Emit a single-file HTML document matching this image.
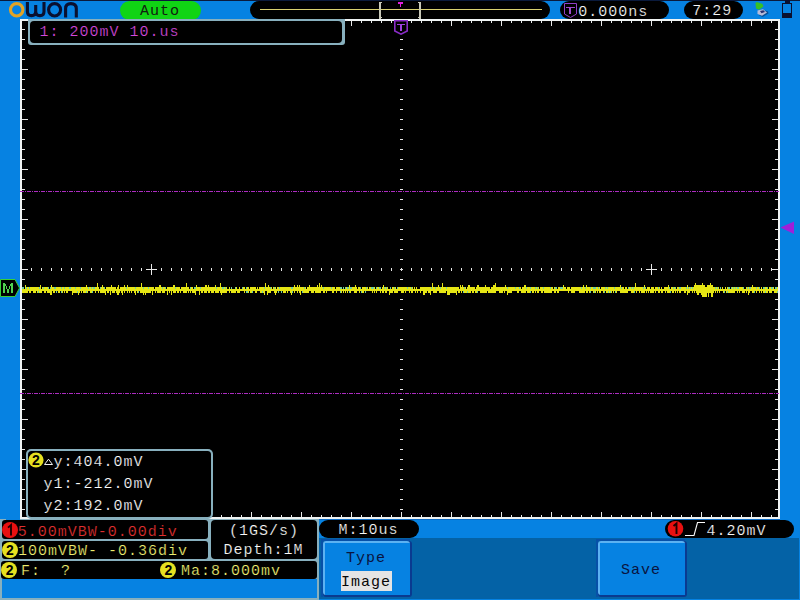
<!DOCTYPE html>
<html><head><meta charset="utf-8"><style>
html,body{margin:0;padding:0;width:800px;height:600px;overflow:hidden;background:#0682e2;}
svg{display:block;font-family:"Liberation Mono", monospace;}
rect{shape-rendering:crispEdges;}
</style></head><body>
<svg width="800" height="600" viewBox="0 0 800 600" >
<rect x="0" y="0" width="800" height="600" fill="#0682e2" />
<rect x="0" y="0" width="800" height="1" fill="#0a1a3c" />
<circle cx="16.7" cy="9.8" r="6.2" fill="none" stroke="#e3a325" stroke-width="3.1"/>
<path d="M27.4 2 V11.5 Q27.4 15.6 31.5 15.6 Q35.7 15.6 35.7 11.5 V5 M35.7 11.5 Q35.7 15.6 40 15.6 Q44 15.6 44 11.5 V2" fill="none" stroke="#0a1030" stroke-width="3.1"/>
<ellipse cx="54.6" cy="9.8" rx="6.0" ry="6.2" fill="none" stroke="#0a1030" stroke-width="3.1"/>
<path d="M65.6 17.5 V8.6 Q65.6 3.6 70.9 3.6 Q76.3 3.6 76.3 8.6 V17.5" fill="none" stroke="#0a1030" stroke-width="3.1"/>
<rect x="120" y="1" width="81" height="19" rx="9.5" ry="9.5" fill="#10d414" style="shape-rendering:auto" />
<text x="140.00 150.00 160.00 170.00" y="15" fill="#102010" font-size="15" >Auto</text>
<rect x="250" y="1" width="300" height="18" rx="9" ry="9" fill="#000" style="shape-rendering:auto" />
<rect x="260" y="9" width="282" height="1" fill="#d8d070" />
<rect x="379" y="2" width="2" height="17" fill="#c8c8b8" />
<rect x="381" y="2" width="1" height="1" fill="#c8c8b8" />
<rect x="381" y="17" width="1" height="1" fill="#c8c8b8" />
<rect x="419" y="2" width="2" height="17" fill="#c8c8b8" />
<rect x="418" y="2" width="1" height="1" fill="#c8c8b8" />
<rect x="418" y="17" width="1" height="1" fill="#c8c8b8" />
<rect x="398" y="2" width="5" height="2" fill="#e020e0" />
<rect x="400" y="4" width="1" height="3" fill="#e020e0" />
<rect x="560" y="1" width="109" height="18" rx="9" ry="9" fill="#000" style="shape-rendering:auto" />
<text x="578.30 588.30 598.30 608.30 618.30 628.30 638.30" y="16" fill="#fafafa" font-size="15"  stroke="#000" stroke-width="0.2">0.000ns</text>
<rect x="684" y="1" width="59" height="18" rx="9" ry="9" fill="#000" style="shape-rendering:auto" />
<text x="692.20 702.20 712.20 722.20" y="15" fill="#fafafa" font-size="15"  stroke="#000" stroke-width="0.2">7:29</text>
<path d="M564.5 3.5 H576.5 V14 L570.5 17.5 L564.5 14 Z" fill="#000" stroke="#9040c8" stroke-width="1"/>
<rect x="566" y="7" width="9" height="1" fill="#a048d0" />
<rect x="569" y="8" width="2" height="6" fill="#a048d0" />
<path d="M758.5 15 L762.5 17 L768.5 13.5 L768 11.5 L765.5 10.5 Z" fill="#0a3a78" opacity="0.7"/>
<path d="M755.5 3 L757 2 L762.5 4 L763.5 6.5 L759 9.8 L756 8.5 Z" fill="#38c024"/>
<path d="M757.5 10.5 L763 9.2 L767 12.5 L762 15.8 L757.5 14 Z" fill="#b8bcd8"/>
<path d="M760 11 L763.5 10.2 L765 12 L761.5 13.2 Z" fill="#283070"/>
<rect x="785" y="0" width="5" height="3" fill="#0a1030" />
<rect x="782" y="3" width="10" height="15" fill="#0a1030" />
<rect x="783" y="4" width="8" height="9" fill="#0682e2" />
<rect x="20" y="19" width="760" height="500" fill="#f0f4f4" />
<rect x="22" y="21" width="756" height="496" fill="#000" />
<rect x="31" y="21" width="1" height="2" fill="#e8e8e8" />
<rect x="31" y="515" width="1" height="2" fill="#e8e8e8" />
<rect x="41" y="21" width="1" height="2" fill="#e8e8e8" />
<rect x="41" y="515" width="1" height="2" fill="#e8e8e8" />
<rect x="51" y="21" width="1" height="5" fill="#e8e8e8" />
<rect x="51" y="512" width="1" height="5" fill="#e8e8e8" />
<rect x="61" y="21" width="1" height="2" fill="#e8e8e8" />
<rect x="61" y="515" width="1" height="2" fill="#e8e8e8" />
<rect x="71" y="21" width="1" height="2" fill="#e8e8e8" />
<rect x="71" y="515" width="1" height="2" fill="#e8e8e8" />
<rect x="81" y="21" width="1" height="2" fill="#e8e8e8" />
<rect x="81" y="515" width="1" height="2" fill="#e8e8e8" />
<rect x="91" y="21" width="1" height="2" fill="#e8e8e8" />
<rect x="91" y="515" width="1" height="2" fill="#e8e8e8" />
<rect x="101" y="21" width="1" height="5" fill="#e8e8e8" />
<rect x="101" y="512" width="1" height="5" fill="#e8e8e8" />
<rect x="111" y="21" width="1" height="2" fill="#e8e8e8" />
<rect x="111" y="515" width="1" height="2" fill="#e8e8e8" />
<rect x="121" y="21" width="1" height="2" fill="#e8e8e8" />
<rect x="121" y="515" width="1" height="2" fill="#e8e8e8" />
<rect x="131" y="21" width="1" height="2" fill="#e8e8e8" />
<rect x="131" y="515" width="1" height="2" fill="#e8e8e8" />
<rect x="141" y="21" width="1" height="2" fill="#e8e8e8" />
<rect x="141" y="515" width="1" height="2" fill="#e8e8e8" />
<rect x="151" y="21" width="1" height="5" fill="#e8e8e8" />
<rect x="151" y="512" width="1" height="5" fill="#e8e8e8" />
<rect x="161" y="21" width="1" height="2" fill="#e8e8e8" />
<rect x="161" y="515" width="1" height="2" fill="#e8e8e8" />
<rect x="171" y="21" width="1" height="2" fill="#e8e8e8" />
<rect x="171" y="515" width="1" height="2" fill="#e8e8e8" />
<rect x="181" y="21" width="1" height="2" fill="#e8e8e8" />
<rect x="181" y="515" width="1" height="2" fill="#e8e8e8" />
<rect x="191" y="21" width="1" height="2" fill="#e8e8e8" />
<rect x="191" y="515" width="1" height="2" fill="#e8e8e8" />
<rect x="201" y="21" width="1" height="5" fill="#e8e8e8" />
<rect x="201" y="512" width="1" height="5" fill="#e8e8e8" />
<rect x="211" y="21" width="1" height="2" fill="#e8e8e8" />
<rect x="211" y="515" width="1" height="2" fill="#e8e8e8" />
<rect x="221" y="21" width="1" height="2" fill="#e8e8e8" />
<rect x="221" y="515" width="1" height="2" fill="#e8e8e8" />
<rect x="231" y="21" width="1" height="2" fill="#e8e8e8" />
<rect x="231" y="515" width="1" height="2" fill="#e8e8e8" />
<rect x="241" y="21" width="1" height="2" fill="#e8e8e8" />
<rect x="241" y="515" width="1" height="2" fill="#e8e8e8" />
<rect x="251" y="21" width="1" height="5" fill="#e8e8e8" />
<rect x="251" y="512" width="1" height="5" fill="#e8e8e8" />
<rect x="261" y="21" width="1" height="2" fill="#e8e8e8" />
<rect x="261" y="515" width="1" height="2" fill="#e8e8e8" />
<rect x="271" y="21" width="1" height="2" fill="#e8e8e8" />
<rect x="271" y="515" width="1" height="2" fill="#e8e8e8" />
<rect x="281" y="21" width="1" height="2" fill="#e8e8e8" />
<rect x="281" y="515" width="1" height="2" fill="#e8e8e8" />
<rect x="291" y="21" width="1" height="2" fill="#e8e8e8" />
<rect x="291" y="515" width="1" height="2" fill="#e8e8e8" />
<rect x="301" y="21" width="1" height="5" fill="#e8e8e8" />
<rect x="301" y="512" width="1" height="5" fill="#e8e8e8" />
<rect x="311" y="21" width="1" height="2" fill="#e8e8e8" />
<rect x="311" y="515" width="1" height="2" fill="#e8e8e8" />
<rect x="321" y="21" width="1" height="2" fill="#e8e8e8" />
<rect x="321" y="515" width="1" height="2" fill="#e8e8e8" />
<rect x="331" y="21" width="1" height="2" fill="#e8e8e8" />
<rect x="331" y="515" width="1" height="2" fill="#e8e8e8" />
<rect x="341" y="21" width="1" height="2" fill="#e8e8e8" />
<rect x="341" y="515" width="1" height="2" fill="#e8e8e8" />
<rect x="351" y="21" width="1" height="5" fill="#e8e8e8" />
<rect x="351" y="512" width="1" height="5" fill="#e8e8e8" />
<rect x="361" y="21" width="1" height="2" fill="#e8e8e8" />
<rect x="361" y="515" width="1" height="2" fill="#e8e8e8" />
<rect x="371" y="21" width="1" height="2" fill="#e8e8e8" />
<rect x="371" y="515" width="1" height="2" fill="#e8e8e8" />
<rect x="381" y="21" width="1" height="2" fill="#e8e8e8" />
<rect x="381" y="515" width="1" height="2" fill="#e8e8e8" />
<rect x="391" y="21" width="1" height="2" fill="#e8e8e8" />
<rect x="391" y="515" width="1" height="2" fill="#e8e8e8" />
<rect x="401" y="21" width="1" height="5" fill="#e8e8e8" />
<rect x="401" y="512" width="1" height="5" fill="#e8e8e8" />
<rect x="411" y="21" width="1" height="2" fill="#e8e8e8" />
<rect x="411" y="515" width="1" height="2" fill="#e8e8e8" />
<rect x="421" y="21" width="1" height="2" fill="#e8e8e8" />
<rect x="421" y="515" width="1" height="2" fill="#e8e8e8" />
<rect x="431" y="21" width="1" height="2" fill="#e8e8e8" />
<rect x="431" y="515" width="1" height="2" fill="#e8e8e8" />
<rect x="441" y="21" width="1" height="2" fill="#e8e8e8" />
<rect x="441" y="515" width="1" height="2" fill="#e8e8e8" />
<rect x="451" y="21" width="1" height="5" fill="#e8e8e8" />
<rect x="451" y="512" width="1" height="5" fill="#e8e8e8" />
<rect x="461" y="21" width="1" height="2" fill="#e8e8e8" />
<rect x="461" y="515" width="1" height="2" fill="#e8e8e8" />
<rect x="471" y="21" width="1" height="2" fill="#e8e8e8" />
<rect x="471" y="515" width="1" height="2" fill="#e8e8e8" />
<rect x="481" y="21" width="1" height="2" fill="#e8e8e8" />
<rect x="481" y="515" width="1" height="2" fill="#e8e8e8" />
<rect x="491" y="21" width="1" height="2" fill="#e8e8e8" />
<rect x="491" y="515" width="1" height="2" fill="#e8e8e8" />
<rect x="501" y="21" width="1" height="5" fill="#e8e8e8" />
<rect x="501" y="512" width="1" height="5" fill="#e8e8e8" />
<rect x="511" y="21" width="1" height="2" fill="#e8e8e8" />
<rect x="511" y="515" width="1" height="2" fill="#e8e8e8" />
<rect x="521" y="21" width="1" height="2" fill="#e8e8e8" />
<rect x="521" y="515" width="1" height="2" fill="#e8e8e8" />
<rect x="531" y="21" width="1" height="2" fill="#e8e8e8" />
<rect x="531" y="515" width="1" height="2" fill="#e8e8e8" />
<rect x="541" y="21" width="1" height="2" fill="#e8e8e8" />
<rect x="541" y="515" width="1" height="2" fill="#e8e8e8" />
<rect x="551" y="21" width="1" height="5" fill="#e8e8e8" />
<rect x="551" y="512" width="1" height="5" fill="#e8e8e8" />
<rect x="561" y="21" width="1" height="2" fill="#e8e8e8" />
<rect x="561" y="515" width="1" height="2" fill="#e8e8e8" />
<rect x="571" y="21" width="1" height="2" fill="#e8e8e8" />
<rect x="571" y="515" width="1" height="2" fill="#e8e8e8" />
<rect x="581" y="21" width="1" height="2" fill="#e8e8e8" />
<rect x="581" y="515" width="1" height="2" fill="#e8e8e8" />
<rect x="591" y="21" width="1" height="2" fill="#e8e8e8" />
<rect x="591" y="515" width="1" height="2" fill="#e8e8e8" />
<rect x="601" y="21" width="1" height="5" fill="#e8e8e8" />
<rect x="601" y="512" width="1" height="5" fill="#e8e8e8" />
<rect x="611" y="21" width="1" height="2" fill="#e8e8e8" />
<rect x="611" y="515" width="1" height="2" fill="#e8e8e8" />
<rect x="621" y="21" width="1" height="2" fill="#e8e8e8" />
<rect x="621" y="515" width="1" height="2" fill="#e8e8e8" />
<rect x="631" y="21" width="1" height="2" fill="#e8e8e8" />
<rect x="631" y="515" width="1" height="2" fill="#e8e8e8" />
<rect x="641" y="21" width="1" height="2" fill="#e8e8e8" />
<rect x="641" y="515" width="1" height="2" fill="#e8e8e8" />
<rect x="651" y="21" width="1" height="5" fill="#e8e8e8" />
<rect x="651" y="512" width="1" height="5" fill="#e8e8e8" />
<rect x="661" y="21" width="1" height="2" fill="#e8e8e8" />
<rect x="661" y="515" width="1" height="2" fill="#e8e8e8" />
<rect x="671" y="21" width="1" height="2" fill="#e8e8e8" />
<rect x="671" y="515" width="1" height="2" fill="#e8e8e8" />
<rect x="681" y="21" width="1" height="2" fill="#e8e8e8" />
<rect x="681" y="515" width="1" height="2" fill="#e8e8e8" />
<rect x="691" y="21" width="1" height="2" fill="#e8e8e8" />
<rect x="691" y="515" width="1" height="2" fill="#e8e8e8" />
<rect x="701" y="21" width="1" height="5" fill="#e8e8e8" />
<rect x="701" y="512" width="1" height="5" fill="#e8e8e8" />
<rect x="711" y="21" width="1" height="2" fill="#e8e8e8" />
<rect x="711" y="515" width="1" height="2" fill="#e8e8e8" />
<rect x="721" y="21" width="1" height="2" fill="#e8e8e8" />
<rect x="721" y="515" width="1" height="2" fill="#e8e8e8" />
<rect x="731" y="21" width="1" height="2" fill="#e8e8e8" />
<rect x="731" y="515" width="1" height="2" fill="#e8e8e8" />
<rect x="741" y="21" width="1" height="2" fill="#e8e8e8" />
<rect x="741" y="515" width="1" height="2" fill="#e8e8e8" />
<rect x="751" y="21" width="1" height="5" fill="#e8e8e8" />
<rect x="751" y="512" width="1" height="5" fill="#e8e8e8" />
<rect x="761" y="21" width="1" height="2" fill="#e8e8e8" />
<rect x="761" y="515" width="1" height="2" fill="#e8e8e8" />
<rect x="771" y="21" width="1" height="2" fill="#e8e8e8" />
<rect x="771" y="515" width="1" height="2" fill="#e8e8e8" />
<rect x="22" y="29" width="3" height="1" fill="#e8e8e8" />
<rect x="775" y="29" width="3" height="1" fill="#e8e8e8" />
<rect x="22" y="39" width="3" height="1" fill="#e8e8e8" />
<rect x="775" y="39" width="3" height="1" fill="#e8e8e8" />
<rect x="22" y="49" width="3" height="1" fill="#e8e8e8" />
<rect x="775" y="49" width="3" height="1" fill="#e8e8e8" />
<rect x="22" y="59" width="3" height="1" fill="#e8e8e8" />
<rect x="775" y="59" width="3" height="1" fill="#e8e8e8" />
<rect x="22" y="69" width="6" height="1" fill="#e8e8e8" />
<rect x="772" y="69" width="6" height="1" fill="#e8e8e8" />
<rect x="22" y="79" width="3" height="1" fill="#e8e8e8" />
<rect x="775" y="79" width="3" height="1" fill="#e8e8e8" />
<rect x="22" y="89" width="3" height="1" fill="#e8e8e8" />
<rect x="775" y="89" width="3" height="1" fill="#e8e8e8" />
<rect x="22" y="99" width="3" height="1" fill="#e8e8e8" />
<rect x="775" y="99" width="3" height="1" fill="#e8e8e8" />
<rect x="22" y="109" width="3" height="1" fill="#e8e8e8" />
<rect x="775" y="109" width="3" height="1" fill="#e8e8e8" />
<rect x="22" y="119" width="6" height="1" fill="#e8e8e8" />
<rect x="772" y="119" width="6" height="1" fill="#e8e8e8" />
<rect x="22" y="129" width="3" height="1" fill="#e8e8e8" />
<rect x="775" y="129" width="3" height="1" fill="#e8e8e8" />
<rect x="22" y="139" width="3" height="1" fill="#e8e8e8" />
<rect x="775" y="139" width="3" height="1" fill="#e8e8e8" />
<rect x="22" y="149" width="3" height="1" fill="#e8e8e8" />
<rect x="775" y="149" width="3" height="1" fill="#e8e8e8" />
<rect x="22" y="159" width="3" height="1" fill="#e8e8e8" />
<rect x="775" y="159" width="3" height="1" fill="#e8e8e8" />
<rect x="22" y="169" width="6" height="1" fill="#e8e8e8" />
<rect x="772" y="169" width="6" height="1" fill="#e8e8e8" />
<rect x="22" y="179" width="3" height="1" fill="#e8e8e8" />
<rect x="775" y="179" width="3" height="1" fill="#e8e8e8" />
<rect x="22" y="189" width="3" height="1" fill="#e8e8e8" />
<rect x="775" y="189" width="3" height="1" fill="#e8e8e8" />
<rect x="22" y="199" width="3" height="1" fill="#e8e8e8" />
<rect x="775" y="199" width="3" height="1" fill="#e8e8e8" />
<rect x="22" y="209" width="3" height="1" fill="#e8e8e8" />
<rect x="775" y="209" width="3" height="1" fill="#e8e8e8" />
<rect x="22" y="219" width="6" height="1" fill="#e8e8e8" />
<rect x="772" y="219" width="6" height="1" fill="#e8e8e8" />
<rect x="22" y="229" width="3" height="1" fill="#e8e8e8" />
<rect x="775" y="229" width="3" height="1" fill="#e8e8e8" />
<rect x="22" y="239" width="3" height="1" fill="#e8e8e8" />
<rect x="775" y="239" width="3" height="1" fill="#e8e8e8" />
<rect x="22" y="249" width="3" height="1" fill="#e8e8e8" />
<rect x="775" y="249" width="3" height="1" fill="#e8e8e8" />
<rect x="22" y="259" width="3" height="1" fill="#e8e8e8" />
<rect x="775" y="259" width="3" height="1" fill="#e8e8e8" />
<rect x="22" y="269" width="6" height="1" fill="#e8e8e8" />
<rect x="772" y="269" width="6" height="1" fill="#e8e8e8" />
<rect x="22" y="279" width="3" height="1" fill="#e8e8e8" />
<rect x="775" y="279" width="3" height="1" fill="#e8e8e8" />
<rect x="22" y="289" width="3" height="1" fill="#e8e8e8" />
<rect x="775" y="289" width="3" height="1" fill="#e8e8e8" />
<rect x="22" y="299" width="3" height="1" fill="#e8e8e8" />
<rect x="775" y="299" width="3" height="1" fill="#e8e8e8" />
<rect x="22" y="309" width="3" height="1" fill="#e8e8e8" />
<rect x="775" y="309" width="3" height="1" fill="#e8e8e8" />
<rect x="22" y="319" width="6" height="1" fill="#e8e8e8" />
<rect x="772" y="319" width="6" height="1" fill="#e8e8e8" />
<rect x="22" y="329" width="3" height="1" fill="#e8e8e8" />
<rect x="775" y="329" width="3" height="1" fill="#e8e8e8" />
<rect x="22" y="339" width="3" height="1" fill="#e8e8e8" />
<rect x="775" y="339" width="3" height="1" fill="#e8e8e8" />
<rect x="22" y="349" width="3" height="1" fill="#e8e8e8" />
<rect x="775" y="349" width="3" height="1" fill="#e8e8e8" />
<rect x="22" y="359" width="3" height="1" fill="#e8e8e8" />
<rect x="775" y="359" width="3" height="1" fill="#e8e8e8" />
<rect x="22" y="369" width="6" height="1" fill="#e8e8e8" />
<rect x="772" y="369" width="6" height="1" fill="#e8e8e8" />
<rect x="22" y="379" width="3" height="1" fill="#e8e8e8" />
<rect x="775" y="379" width="3" height="1" fill="#e8e8e8" />
<rect x="22" y="389" width="3" height="1" fill="#e8e8e8" />
<rect x="775" y="389" width="3" height="1" fill="#e8e8e8" />
<rect x="22" y="399" width="3" height="1" fill="#e8e8e8" />
<rect x="775" y="399" width="3" height="1" fill="#e8e8e8" />
<rect x="22" y="409" width="3" height="1" fill="#e8e8e8" />
<rect x="775" y="409" width="3" height="1" fill="#e8e8e8" />
<rect x="22" y="419" width="6" height="1" fill="#e8e8e8" />
<rect x="772" y="419" width="6" height="1" fill="#e8e8e8" />
<rect x="22" y="429" width="3" height="1" fill="#e8e8e8" />
<rect x="775" y="429" width="3" height="1" fill="#e8e8e8" />
<rect x="22" y="439" width="3" height="1" fill="#e8e8e8" />
<rect x="775" y="439" width="3" height="1" fill="#e8e8e8" />
<rect x="22" y="449" width="3" height="1" fill="#e8e8e8" />
<rect x="775" y="449" width="3" height="1" fill="#e8e8e8" />
<rect x="22" y="459" width="3" height="1" fill="#e8e8e8" />
<rect x="775" y="459" width="3" height="1" fill="#e8e8e8" />
<rect x="22" y="469" width="6" height="1" fill="#e8e8e8" />
<rect x="772" y="469" width="6" height="1" fill="#e8e8e8" />
<rect x="22" y="479" width="3" height="1" fill="#e8e8e8" />
<rect x="775" y="479" width="3" height="1" fill="#e8e8e8" />
<rect x="22" y="489" width="3" height="1" fill="#e8e8e8" />
<rect x="775" y="489" width="3" height="1" fill="#e8e8e8" />
<rect x="22" y="499" width="3" height="1" fill="#e8e8e8" />
<rect x="775" y="499" width="3" height="1" fill="#e8e8e8" />
<rect x="22" y="509" width="3" height="1" fill="#e8e8e8" />
<rect x="775" y="509" width="3" height="1" fill="#e8e8e8" />
<rect x="400" y="39" width="3" height="1" fill="#e8e8e8" />
<rect x="400" y="49" width="3" height="1" fill="#e8e8e8" />
<rect x="400" y="59" width="3" height="1" fill="#e8e8e8" />
<rect x="400" y="69" width="3" height="1" fill="#e8e8e8" />
<rect x="400" y="79" width="3" height="1" fill="#e8e8e8" />
<rect x="400" y="89" width="3" height="1" fill="#e8e8e8" />
<rect x="400" y="99" width="3" height="1" fill="#e8e8e8" />
<rect x="400" y="109" width="3" height="1" fill="#e8e8e8" />
<rect x="400" y="119" width="3" height="1" fill="#e8e8e8" />
<rect x="400" y="129" width="3" height="1" fill="#e8e8e8" />
<rect x="400" y="139" width="3" height="1" fill="#e8e8e8" />
<rect x="400" y="149" width="3" height="1" fill="#e8e8e8" />
<rect x="400" y="159" width="3" height="1" fill="#e8e8e8" />
<rect x="400" y="169" width="3" height="1" fill="#e8e8e8" />
<rect x="400" y="179" width="3" height="1" fill="#e8e8e8" />
<rect x="400" y="189" width="3" height="1" fill="#e8e8e8" />
<rect x="400" y="199" width="3" height="1" fill="#e8e8e8" />
<rect x="400" y="209" width="3" height="1" fill="#e8e8e8" />
<rect x="400" y="219" width="3" height="1" fill="#e8e8e8" />
<rect x="400" y="229" width="3" height="1" fill="#e8e8e8" />
<rect x="400" y="239" width="3" height="1" fill="#e8e8e8" />
<rect x="400" y="249" width="3" height="1" fill="#e8e8e8" />
<rect x="400" y="259" width="3" height="1" fill="#e8e8e8" />
<rect x="400" y="269" width="3" height="1" fill="#e8e8e8" />
<rect x="400" y="279" width="3" height="1" fill="#e8e8e8" />
<rect x="400" y="289" width="3" height="1" fill="#e8e8e8" />
<rect x="400" y="299" width="3" height="1" fill="#e8e8e8" />
<rect x="400" y="309" width="3" height="1" fill="#e8e8e8" />
<rect x="400" y="319" width="3" height="1" fill="#e8e8e8" />
<rect x="400" y="329" width="3" height="1" fill="#e8e8e8" />
<rect x="400" y="339" width="3" height="1" fill="#e8e8e8" />
<rect x="400" y="349" width="3" height="1" fill="#e8e8e8" />
<rect x="400" y="359" width="3" height="1" fill="#e8e8e8" />
<rect x="400" y="369" width="3" height="1" fill="#e8e8e8" />
<rect x="400" y="379" width="3" height="1" fill="#e8e8e8" />
<rect x="400" y="389" width="3" height="1" fill="#e8e8e8" />
<rect x="400" y="399" width="3" height="1" fill="#e8e8e8" />
<rect x="400" y="409" width="3" height="1" fill="#e8e8e8" />
<rect x="400" y="419" width="3" height="1" fill="#e8e8e8" />
<rect x="400" y="429" width="3" height="1" fill="#e8e8e8" />
<rect x="400" y="439" width="3" height="1" fill="#e8e8e8" />
<rect x="400" y="449" width="3" height="1" fill="#e8e8e8" />
<rect x="400" y="459" width="3" height="1" fill="#e8e8e8" />
<rect x="400" y="469" width="3" height="1" fill="#e8e8e8" />
<rect x="400" y="479" width="3" height="1" fill="#e8e8e8" />
<rect x="400" y="489" width="3" height="1" fill="#e8e8e8" />
<rect x="400" y="499" width="3" height="1" fill="#e8e8e8" />
<rect x="400" y="509" width="3" height="1" fill="#e8e8e8" />
<rect x="31" y="268" width="1" height="3" fill="#e8e8e8" />
<rect x="41" y="268" width="1" height="3" fill="#e8e8e8" />
<rect x="51" y="268" width="1" height="3" fill="#e8e8e8" />
<rect x="61" y="268" width="1" height="3" fill="#e8e8e8" />
<rect x="71" y="268" width="1" height="3" fill="#e8e8e8" />
<rect x="81" y="268" width="1" height="3" fill="#e8e8e8" />
<rect x="91" y="268" width="1" height="3" fill="#e8e8e8" />
<rect x="101" y="268" width="1" height="3" fill="#e8e8e8" />
<rect x="111" y="268" width="1" height="3" fill="#e8e8e8" />
<rect x="121" y="268" width="1" height="3" fill="#e8e8e8" />
<rect x="131" y="268" width="1" height="3" fill="#e8e8e8" />
<rect x="141" y="268" width="1" height="3" fill="#e8e8e8" />
<rect x="151" y="268" width="1" height="3" fill="#e8e8e8" />
<rect x="161" y="268" width="1" height="3" fill="#e8e8e8" />
<rect x="171" y="268" width="1" height="3" fill="#e8e8e8" />
<rect x="181" y="268" width="1" height="3" fill="#e8e8e8" />
<rect x="191" y="268" width="1" height="3" fill="#e8e8e8" />
<rect x="201" y="268" width="1" height="3" fill="#e8e8e8" />
<rect x="211" y="268" width="1" height="3" fill="#e8e8e8" />
<rect x="221" y="268" width="1" height="3" fill="#e8e8e8" />
<rect x="231" y="268" width="1" height="3" fill="#e8e8e8" />
<rect x="241" y="268" width="1" height="3" fill="#e8e8e8" />
<rect x="251" y="268" width="1" height="3" fill="#e8e8e8" />
<rect x="261" y="268" width="1" height="3" fill="#e8e8e8" />
<rect x="271" y="268" width="1" height="3" fill="#e8e8e8" />
<rect x="281" y="268" width="1" height="3" fill="#e8e8e8" />
<rect x="291" y="268" width="1" height="3" fill="#e8e8e8" />
<rect x="301" y="268" width="1" height="3" fill="#e8e8e8" />
<rect x="311" y="268" width="1" height="3" fill="#e8e8e8" />
<rect x="321" y="268" width="1" height="3" fill="#e8e8e8" />
<rect x="331" y="268" width="1" height="3" fill="#e8e8e8" />
<rect x="341" y="268" width="1" height="3" fill="#e8e8e8" />
<rect x="351" y="268" width="1" height="3" fill="#e8e8e8" />
<rect x="361" y="268" width="1" height="3" fill="#e8e8e8" />
<rect x="371" y="268" width="1" height="3" fill="#e8e8e8" />
<rect x="381" y="268" width="1" height="3" fill="#e8e8e8" />
<rect x="391" y="268" width="1" height="3" fill="#e8e8e8" />
<rect x="401" y="268" width="1" height="3" fill="#e8e8e8" />
<rect x="411" y="268" width="1" height="3" fill="#e8e8e8" />
<rect x="421" y="268" width="1" height="3" fill="#e8e8e8" />
<rect x="431" y="268" width="1" height="3" fill="#e8e8e8" />
<rect x="441" y="268" width="1" height="3" fill="#e8e8e8" />
<rect x="451" y="268" width="1" height="3" fill="#e8e8e8" />
<rect x="461" y="268" width="1" height="3" fill="#e8e8e8" />
<rect x="471" y="268" width="1" height="3" fill="#e8e8e8" />
<rect x="481" y="268" width="1" height="3" fill="#e8e8e8" />
<rect x="491" y="268" width="1" height="3" fill="#e8e8e8" />
<rect x="501" y="268" width="1" height="3" fill="#e8e8e8" />
<rect x="511" y="268" width="1" height="3" fill="#e8e8e8" />
<rect x="521" y="268" width="1" height="3" fill="#e8e8e8" />
<rect x="531" y="268" width="1" height="3" fill="#e8e8e8" />
<rect x="541" y="268" width="1" height="3" fill="#e8e8e8" />
<rect x="551" y="268" width="1" height="3" fill="#e8e8e8" />
<rect x="561" y="268" width="1" height="3" fill="#e8e8e8" />
<rect x="571" y="268" width="1" height="3" fill="#e8e8e8" />
<rect x="581" y="268" width="1" height="3" fill="#e8e8e8" />
<rect x="591" y="268" width="1" height="3" fill="#e8e8e8" />
<rect x="601" y="268" width="1" height="3" fill="#e8e8e8" />
<rect x="611" y="268" width="1" height="3" fill="#e8e8e8" />
<rect x="621" y="268" width="1" height="3" fill="#e8e8e8" />
<rect x="631" y="268" width="1" height="3" fill="#e8e8e8" />
<rect x="641" y="268" width="1" height="3" fill="#e8e8e8" />
<rect x="651" y="268" width="1" height="3" fill="#e8e8e8" />
<rect x="661" y="268" width="1" height="3" fill="#e8e8e8" />
<rect x="671" y="268" width="1" height="3" fill="#e8e8e8" />
<rect x="681" y="268" width="1" height="3" fill="#e8e8e8" />
<rect x="691" y="268" width="1" height="3" fill="#e8e8e8" />
<rect x="701" y="268" width="1" height="3" fill="#e8e8e8" />
<rect x="711" y="268" width="1" height="3" fill="#e8e8e8" />
<rect x="721" y="268" width="1" height="3" fill="#e8e8e8" />
<rect x="731" y="268" width="1" height="3" fill="#e8e8e8" />
<rect x="741" y="268" width="1" height="3" fill="#e8e8e8" />
<rect x="751" y="268" width="1" height="3" fill="#e8e8e8" />
<rect x="761" y="268" width="1" height="3" fill="#e8e8e8" />
<rect x="771" y="268" width="1" height="3" fill="#e8e8e8" />
<rect x="151" y="264" width="1" height="11" fill="#e8e8e8" />
<rect x="146" y="269" width="11" height="1" fill="#e8e8e8" />
<rect x="651" y="264" width="1" height="11" fill="#e8e8e8" />
<rect x="646" y="269" width="11" height="1" fill="#e8e8e8" />
<rect x="400" y="269" width="3" height="1" fill="#e8e8e8" />
<rect x="401" y="268" width="1" height="3" fill="#e8e8e8" />
<line x1="20" y1="191.5" x2="779" y2="191.5" stroke="#ac2cc0" stroke-width="1" stroke-dasharray="4 1 1 1" stroke-dashoffset="0"/>
<line x1="20" y1="393.5" x2="779" y2="393.5" stroke="#ac2cc0" stroke-width="1" stroke-dasharray="4 1 1 1" stroke-dashoffset="0"/>
<g fill="#e6e614"><rect x="22" y="287" width="1" height="6"/><rect x="23" y="287" width="1" height="6"/><rect x="24" y="289" width="1" height="4"/><rect x="25" y="285" width="1" height="8"/><rect x="26" y="287" width="1" height="6"/><rect x="27" y="287" width="1" height="6"/><rect x="28" y="287" width="1" height="4"/><rect x="29" y="287" width="1" height="6"/><rect x="30" y="287" width="1" height="6"/><rect x="31" y="287" width="1" height="4"/><rect x="32" y="287" width="1" height="4"/><rect x="33" y="287" width="1" height="6"/><rect x="34" y="287" width="1" height="6"/><rect x="35" y="287" width="1" height="6"/><rect x="36" y="287" width="1" height="4"/><rect x="37" y="287" width="1" height="6"/><rect x="38" y="287" width="1" height="6"/><rect x="39" y="287" width="1" height="6"/><rect x="40" y="285" width="1" height="8"/><rect x="41" y="289" width="1" height="4"/><rect x="42" y="287" width="1" height="4"/><rect x="43" y="287" width="1" height="4"/><rect x="44" y="287" width="1" height="6"/><rect x="45" y="287" width="1" height="6"/><rect x="46" y="287" width="1" height="4"/><rect x="47" y="287" width="1" height="6"/><rect x="48" y="287" width="1" height="6"/><rect x="49" y="289" width="1" height="4"/><rect x="50" y="287" width="1" height="8"/><rect x="51" y="285" width="1" height="10"/><rect x="52" y="287" width="1" height="4"/><rect x="53" y="287" width="1" height="6"/><rect x="54" y="287" width="1" height="6"/><rect x="55" y="287" width="1" height="4"/><rect x="56" y="287" width="1" height="6"/><rect x="57" y="287" width="1" height="4"/><rect x="58" y="287" width="1" height="6"/><rect x="59" y="287" width="1" height="6"/><rect x="60" y="287" width="1" height="4"/><rect x="61" y="287" width="1" height="6"/><rect x="62" y="287" width="1" height="6"/><rect x="63" y="287" width="1" height="4"/><rect x="64" y="287" width="1" height="6"/><rect x="65" y="287" width="1" height="4"/><rect x="66" y="287" width="1" height="6"/><rect x="67" y="287" width="1" height="6"/><rect x="68" y="287" width="1" height="4"/><rect x="69" y="287" width="1" height="4"/><rect x="70" y="287" width="1" height="4"/><rect x="71" y="287" width="1" height="4"/><rect x="72" y="287" width="1" height="8"/><rect x="73" y="287" width="1" height="6"/><rect x="74" y="287" width="1" height="6"/><rect x="75" y="287" width="1" height="6"/><rect x="76" y="287" width="1" height="6"/><rect x="77" y="287" width="1" height="6"/><rect x="78" y="287" width="1" height="8"/><rect x="79" y="287" width="1" height="6"/><rect x="80" y="287" width="1" height="4"/><rect x="81" y="287" width="1" height="6"/><rect x="82" y="287" width="1" height="4"/><rect x="83" y="287" width="1" height="6"/><rect x="84" y="287" width="1" height="6"/><rect x="85" y="287" width="1" height="6"/><rect x="86" y="285" width="1" height="8"/><rect x="87" y="287" width="1" height="6"/><rect x="88" y="287" width="1" height="4"/><rect x="89" y="287" width="1" height="4"/><rect x="90" y="287" width="1" height="6"/><rect x="91" y="287" width="1" height="6"/><rect x="92" y="287" width="1" height="6"/><rect x="93" y="287" width="1" height="4"/><rect x="94" y="287" width="1" height="4"/><rect x="95" y="287" width="1" height="6"/><rect x="96" y="287" width="1" height="4"/><rect x="97" y="283" width="1" height="8"/><rect x="98" y="287" width="1" height="6"/><rect x="99" y="289" width="1" height="2"/><rect x="100" y="287" width="1" height="6"/><rect x="101" y="287" width="1" height="6"/><rect x="102" y="285" width="1" height="8"/><rect x="103" y="287" width="1" height="6"/><rect x="104" y="287" width="1" height="6"/><rect x="105" y="289" width="1" height="6"/><rect x="106" y="287" width="1" height="4"/><rect x="107" y="287" width="1" height="6"/><rect x="108" y="287" width="1" height="6"/><rect x="109" y="287" width="1" height="4"/><rect x="110" y="287" width="1" height="8"/><rect x="111" y="285" width="1" height="6"/><rect x="112" y="287" width="1" height="6"/><rect x="113" y="287" width="1" height="6"/><rect x="114" y="287" width="1" height="6"/><rect x="115" y="287" width="1" height="4"/><rect x="116" y="289" width="1" height="4"/><rect x="117" y="287" width="1" height="8"/><rect x="118" y="285" width="1" height="10"/><rect x="119" y="289" width="1" height="4"/><rect x="120" y="287" width="1" height="4"/><rect x="121" y="287" width="1" height="6"/><rect x="122" y="287" width="1" height="8"/><rect x="123" y="287" width="1" height="4"/><rect x="124" y="285" width="1" height="8"/><rect x="125" y="287" width="1" height="4"/><rect x="126" y="287" width="1" height="4"/><rect x="127" y="285" width="1" height="8"/><rect x="128" y="287" width="1" height="4"/><rect x="129" y="287" width="1" height="6"/><rect x="130" y="287" width="1" height="4"/><rect x="131" y="287" width="1" height="6"/><rect x="132" y="287" width="1" height="4"/><rect x="133" y="287" width="1" height="4"/><rect x="134" y="287" width="1" height="6"/><rect x="135" y="287" width="1" height="8"/><rect x="136" y="287" width="1" height="4"/><rect x="137" y="287" width="1" height="6"/><rect x="138" y="287" width="1" height="6"/><rect x="139" y="287" width="1" height="4"/><rect x="140" y="287" width="1" height="6"/><rect x="141" y="283" width="1" height="10"/><rect x="142" y="287" width="1" height="6"/><rect x="143" y="287" width="1" height="8"/><rect x="144" y="287" width="1" height="6"/><rect x="145" y="287" width="1" height="8"/><rect x="146" y="287" width="1" height="6"/><rect x="147" y="287" width="1" height="6"/><rect x="148" y="287" width="1" height="6"/><rect x="149" y="287" width="1" height="6"/><rect x="150" y="287" width="1" height="6"/><rect x="151" y="287" width="1" height="4"/><rect x="152" y="287" width="1" height="8"/><rect x="153" y="287" width="1" height="4"/><rect x="154" y="289" width="1" height="2"/><rect x="155" y="287" width="1" height="6"/><rect x="156" y="287" width="1" height="4"/><rect x="157" y="287" width="1" height="6"/><rect x="158" y="287" width="1" height="6"/><rect x="159" y="285" width="1" height="8"/><rect x="160" y="285" width="1" height="8"/><rect x="161" y="287" width="1" height="4"/><rect x="162" y="287" width="1" height="6"/><rect x="163" y="287" width="1" height="6"/><rect x="164" y="287" width="1" height="6"/><rect x="165" y="287" width="1" height="4"/><rect x="166" y="289" width="1" height="2"/><rect x="167" y="287" width="1" height="8"/><rect x="168" y="287" width="1" height="4"/><rect x="169" y="287" width="1" height="6"/><rect x="170" y="287" width="1" height="4"/><rect x="171" y="287" width="1" height="8"/><rect x="172" y="287" width="1" height="4"/><rect x="173" y="285" width="1" height="8"/><rect x="174" y="285" width="1" height="8"/><rect x="175" y="287" width="1" height="6"/><rect x="176" y="287" width="1" height="4"/><rect x="177" y="287" width="1" height="6"/><rect x="178" y="287" width="1" height="6"/><rect x="179" y="287" width="1" height="4"/><rect x="180" y="289" width="1" height="4"/><rect x="181" y="287" width="1" height="4"/><rect x="182" y="287" width="1" height="4"/><rect x="183" y="287" width="1" height="6"/><rect x="184" y="287" width="1" height="6"/><rect x="185" y="287" width="1" height="6"/><rect x="186" y="283" width="1" height="10"/><rect x="187" y="287" width="1" height="4"/><rect x="188" y="287" width="1" height="6"/><rect x="189" y="289" width="1" height="2"/><rect x="190" y="287" width="1" height="6"/><rect x="191" y="287" width="1" height="4"/><rect x="192" y="287" width="1" height="6"/><rect x="193" y="289" width="1" height="4"/><rect x="194" y="287" width="1" height="6"/><rect x="195" y="287" width="1" height="8"/><rect x="196" y="285" width="1" height="6"/><rect x="197" y="287" width="1" height="4"/><rect x="198" y="287" width="1" height="4"/><rect x="199" y="287" width="1" height="8"/><rect x="200" y="287" width="1" height="4"/><rect x="201" y="287" width="1" height="6"/><rect x="202" y="287" width="1" height="6"/><rect x="203" y="287" width="1" height="4"/><rect x="204" y="287" width="1" height="6"/><rect x="205" y="285" width="1" height="8"/><rect x="206" y="285" width="1" height="8"/><rect x="207" y="287" width="1" height="4"/><rect x="208" y="285" width="1" height="8"/><rect x="209" y="287" width="1" height="6"/><rect x="210" y="287" width="1" height="4"/><rect x="211" y="287" width="1" height="6"/><rect x="212" y="287" width="1" height="6"/><rect x="213" y="287" width="1" height="6"/><rect x="214" y="287" width="1" height="4"/><rect x="215" y="285" width="1" height="8"/><rect x="216" y="287" width="1" height="6"/><rect x="217" y="287" width="1" height="6"/><rect x="218" y="287" width="1" height="6"/><rect x="219" y="287" width="1" height="4"/><rect x="220" y="283" width="1" height="10"/><rect x="221" y="287" width="1" height="8"/><rect x="222" y="287" width="1" height="6"/><rect x="223" y="287" width="1" height="6"/><rect x="224" y="287" width="1" height="6"/><rect x="225" y="287" width="1" height="6"/><rect x="226" y="287" width="1" height="6"/><rect x="227" y="289" width="1" height="2"/><rect x="228" y="289" width="1" height="2"/><rect x="229" y="287" width="1" height="6"/><rect x="230" y="289" width="1" height="2"/><rect x="231" y="287" width="1" height="6"/><rect x="232" y="289" width="1" height="4"/><rect x="233" y="289" width="1" height="4"/><rect x="234" y="289" width="1" height="4"/><rect x="235" y="287" width="1" height="6"/><rect x="236" y="287" width="1" height="4"/><rect x="237" y="289" width="1" height="4"/><rect x="238" y="289" width="1" height="4"/><rect x="239" y="287" width="1" height="6"/><rect x="240" y="289" width="1" height="2"/><rect x="241" y="289" width="1" height="2"/><rect x="242" y="287" width="1" height="4"/><rect x="243" y="287" width="1" height="4"/><rect x="244" y="287" width="1" height="6"/><rect x="245" y="289" width="1" height="2"/><rect x="246" y="287" width="1" height="6"/><rect x="247" y="287" width="1" height="6"/><rect x="248" y="287" width="1" height="6"/><rect x="249" y="289" width="1" height="2"/><rect x="250" y="287" width="1" height="6"/><rect x="251" y="287" width="1" height="6"/><rect x="252" y="287" width="1" height="6"/><rect x="253" y="287" width="1" height="4"/><rect x="254" y="287" width="1" height="4"/><rect x="255" y="287" width="1" height="6"/><rect x="256" y="289" width="1" height="4"/><rect x="257" y="287" width="1" height="4"/><rect x="258" y="289" width="1" height="2"/><rect x="259" y="287" width="1" height="4"/><rect x="260" y="287" width="1" height="6"/><rect x="261" y="287" width="1" height="6"/><rect x="262" y="287" width="1" height="6"/><rect x="263" y="287" width="1" height="6"/><rect x="264" y="287" width="1" height="8"/><rect x="265" y="283" width="1" height="8"/><rect x="266" y="287" width="1" height="4"/><rect x="267" y="287" width="1" height="8"/><rect x="268" y="285" width="1" height="8"/><rect x="269" y="287" width="1" height="6"/><rect x="270" y="287" width="1" height="6"/><rect x="271" y="287" width="1" height="4"/><rect x="272" y="289" width="1" height="2"/><rect x="273" y="287" width="1" height="4"/><rect x="274" y="287" width="1" height="6"/><rect x="275" y="287" width="1" height="8"/><rect x="276" y="289" width="1" height="4"/><rect x="277" y="287" width="1" height="4"/><rect x="278" y="287" width="1" height="6"/><rect x="279" y="287" width="1" height="4"/><rect x="280" y="287" width="1" height="4"/><rect x="281" y="287" width="1" height="6"/><rect x="282" y="287" width="1" height="4"/><rect x="283" y="287" width="1" height="6"/><rect x="284" y="287" width="1" height="6"/><rect x="285" y="287" width="1" height="6"/><rect x="286" y="287" width="1" height="4"/><rect x="287" y="287" width="1" height="6"/><rect x="288" y="287" width="1" height="4"/><rect x="289" y="287" width="1" height="4"/><rect x="290" y="287" width="1" height="6"/><rect x="291" y="287" width="1" height="8"/><rect x="292" y="287" width="1" height="6"/><rect x="293" y="287" width="1" height="4"/><rect x="294" y="285" width="1" height="8"/><rect x="295" y="287" width="1" height="4"/><rect x="296" y="287" width="1" height="4"/><rect x="297" y="285" width="1" height="8"/><rect x="298" y="287" width="1" height="4"/><rect x="299" y="285" width="1" height="8"/><rect x="300" y="287" width="1" height="8"/><rect x="301" y="287" width="1" height="4"/><rect x="302" y="287" width="1" height="6"/><rect x="303" y="287" width="1" height="6"/><rect x="304" y="287" width="1" height="6"/><rect x="305" y="287" width="1" height="6"/><rect x="306" y="289" width="1" height="4"/><rect x="307" y="287" width="1" height="6"/><rect x="308" y="287" width="1" height="6"/><rect x="309" y="285" width="1" height="6"/><rect x="310" y="287" width="1" height="4"/><rect x="311" y="287" width="1" height="6"/><rect x="312" y="287" width="1" height="6"/><rect x="313" y="287" width="1" height="6"/><rect x="314" y="287" width="1" height="4"/><rect x="315" y="287" width="1" height="6"/><rect x="316" y="287" width="1" height="6"/><rect x="317" y="285" width="1" height="8"/><rect x="318" y="287" width="1" height="6"/><rect x="319" y="283" width="1" height="10"/><rect x="320" y="287" width="1" height="6"/><rect x="321" y="285" width="1" height="6"/><rect x="322" y="287" width="1" height="4"/><rect x="323" y="287" width="1" height="6"/><rect x="324" y="287" width="1" height="6"/><rect x="325" y="287" width="1" height="4"/><rect x="326" y="287" width="1" height="6"/><rect x="327" y="287" width="1" height="4"/><rect x="328" y="287" width="1" height="4"/><rect x="329" y="287" width="1" height="4"/><rect x="330" y="287" width="1" height="4"/><rect x="331" y="287" width="1" height="4"/><rect x="332" y="287" width="1" height="6"/><rect x="333" y="287" width="1" height="6"/><rect x="334" y="287" width="1" height="4"/><rect x="335" y="289" width="1" height="2"/><rect x="336" y="287" width="1" height="6"/><rect x="337" y="287" width="1" height="4"/><rect x="338" y="287" width="1" height="4"/><rect x="339" y="287" width="1" height="4"/><rect x="340" y="287" width="1" height="6"/><rect x="341" y="287" width="1" height="6"/><rect x="342" y="289" width="1" height="2"/><rect x="343" y="287" width="1" height="6"/><rect x="344" y="289" width="1" height="2"/><rect x="345" y="287" width="1" height="6"/><rect x="346" y="287" width="1" height="4"/><rect x="347" y="287" width="1" height="6"/><rect x="348" y="287" width="1" height="4"/><rect x="349" y="285" width="1" height="8"/><rect x="350" y="287" width="1" height="6"/><rect x="351" y="287" width="1" height="4"/><rect x="352" y="287" width="1" height="4"/><rect x="353" y="287" width="1" height="4"/><rect x="354" y="287" width="1" height="6"/><rect x="355" y="285" width="1" height="8"/><rect x="356" y="287" width="1" height="6"/><rect x="357" y="289" width="1" height="2"/><rect x="358" y="287" width="1" height="4"/><rect x="359" y="287" width="1" height="6"/><rect x="360" y="287" width="1" height="4"/><rect x="361" y="289" width="1" height="4"/><rect x="362" y="287" width="1" height="6"/><rect x="363" y="287" width="1" height="6"/><rect x="364" y="287" width="1" height="4"/><rect x="365" y="287" width="1" height="6"/><rect x="366" y="287" width="1" height="4"/><rect x="367" y="287" width="1" height="4"/><rect x="368" y="289" width="1" height="2"/><rect x="369" y="287" width="1" height="4"/><rect x="370" y="287" width="1" height="4"/><rect x="371" y="287" width="1" height="4"/><rect x="372" y="287" width="1" height="6"/><rect x="373" y="287" width="1" height="4"/><rect x="374" y="287" width="1" height="6"/><rect x="375" y="289" width="1" height="2"/><rect x="376" y="287" width="1" height="6"/><rect x="377" y="287" width="1" height="4"/><rect x="378" y="287" width="1" height="4"/><rect x="379" y="287" width="1" height="4"/><rect x="380" y="287" width="1" height="6"/><rect x="381" y="289" width="1" height="2"/><rect x="382" y="287" width="1" height="6"/><rect x="383" y="285" width="1" height="8"/><rect x="384" y="287" width="1" height="4"/><rect x="385" y="287" width="1" height="6"/><rect x="386" y="287" width="1" height="6"/><rect x="387" y="287" width="1" height="4"/><rect x="388" y="289" width="1" height="2"/><rect x="389" y="289" width="1" height="6"/><rect x="390" y="287" width="1" height="6"/><rect x="391" y="289" width="1" height="4"/><rect x="392" y="287" width="1" height="6"/><rect x="393" y="287" width="1" height="4"/><rect x="394" y="287" width="1" height="6"/><rect x="395" y="287" width="1" height="6"/><rect x="396" y="289" width="1" height="4"/><rect x="397" y="287" width="1" height="6"/><rect x="398" y="287" width="1" height="4"/><rect x="399" y="287" width="1" height="4"/><rect x="400" y="287" width="1" height="4"/><rect x="401" y="287" width="1" height="6"/><rect x="402" y="287" width="1" height="6"/><rect x="403" y="287" width="1" height="6"/><rect x="404" y="287" width="1" height="4"/><rect x="405" y="287" width="1" height="6"/><rect x="406" y="287" width="1" height="4"/><rect x="407" y="287" width="1" height="4"/><rect x="408" y="287" width="1" height="4"/><rect x="409" y="287" width="1" height="6"/><rect x="410" y="287" width="1" height="4"/><rect x="411" y="287" width="1" height="6"/><rect x="412" y="287" width="1" height="6"/><rect x="413" y="289" width="1" height="2"/><rect x="414" y="287" width="1" height="4"/><rect x="415" y="289" width="1" height="4"/><rect x="416" y="287" width="1" height="4"/><rect x="417" y="289" width="1" height="4"/><rect x="418" y="289" width="1" height="2"/><rect x="419" y="289" width="1" height="2"/><rect x="420" y="287" width="1" height="6"/><rect x="421" y="287" width="1" height="4"/><rect x="422" y="287" width="1" height="4"/><rect x="423" y="287" width="1" height="8"/><rect x="424" y="287" width="1" height="8"/><rect x="425" y="287" width="1" height="6"/><rect x="426" y="287" width="1" height="6"/><rect x="427" y="287" width="1" height="4"/><rect x="428" y="287" width="1" height="6"/><rect x="429" y="287" width="1" height="6"/><rect x="430" y="287" width="1" height="8"/><rect x="431" y="287" width="1" height="4"/><rect x="432" y="283" width="1" height="8"/><rect x="433" y="287" width="1" height="6"/><rect x="434" y="287" width="1" height="6"/><rect x="435" y="287" width="1" height="6"/><rect x="436" y="287" width="1" height="6"/><rect x="437" y="287" width="1" height="4"/><rect x="438" y="285" width="1" height="6"/><rect x="439" y="287" width="1" height="6"/><rect x="440" y="287" width="1" height="6"/><rect x="441" y="287" width="1" height="6"/><rect x="442" y="283" width="1" height="10"/><rect x="443" y="287" width="1" height="6"/><rect x="444" y="287" width="1" height="6"/><rect x="445" y="287" width="1" height="6"/><rect x="446" y="287" width="1" height="4"/><rect x="447" y="287" width="1" height="8"/><rect x="448" y="287" width="1" height="8"/><rect x="449" y="287" width="1" height="8"/><rect x="450" y="287" width="1" height="6"/><rect x="451" y="287" width="1" height="6"/><rect x="452" y="287" width="1" height="6"/><rect x="453" y="287" width="1" height="6"/><rect x="454" y="287" width="1" height="6"/><rect x="455" y="287" width="1" height="6"/><rect x="456" y="287" width="1" height="8"/><rect x="457" y="287" width="1" height="4"/><rect x="458" y="287" width="1" height="6"/><rect x="459" y="289" width="1" height="4"/><rect x="460" y="285" width="1" height="6"/><rect x="461" y="287" width="1" height="6"/><rect x="462" y="285" width="1" height="6"/><rect x="463" y="287" width="1" height="6"/><rect x="464" y="287" width="1" height="6"/><rect x="465" y="287" width="1" height="6"/><rect x="466" y="289" width="1" height="4"/><rect x="467" y="287" width="1" height="6"/><rect x="468" y="285" width="1" height="8"/><rect x="469" y="285" width="1" height="8"/><rect x="470" y="287" width="1" height="6"/><rect x="471" y="287" width="1" height="4"/><rect x="472" y="287" width="1" height="6"/><rect x="473" y="287" width="1" height="6"/><rect x="474" y="287" width="1" height="4"/><rect x="475" y="289" width="1" height="4"/><rect x="476" y="287" width="1" height="6"/><rect x="477" y="285" width="1" height="8"/><rect x="478" y="285" width="1" height="6"/><rect x="479" y="287" width="1" height="4"/><rect x="480" y="287" width="1" height="6"/><rect x="481" y="287" width="1" height="6"/><rect x="482" y="287" width="1" height="6"/><rect x="483" y="287" width="1" height="6"/><rect x="484" y="287" width="1" height="6"/><rect x="485" y="285" width="1" height="8"/><rect x="486" y="287" width="1" height="6"/><rect x="487" y="287" width="1" height="4"/><rect x="488" y="287" width="1" height="6"/><rect x="489" y="287" width="1" height="6"/><rect x="490" y="289" width="1" height="4"/><rect x="491" y="287" width="1" height="6"/><rect x="492" y="287" width="1" height="6"/><rect x="493" y="285" width="1" height="8"/><rect x="494" y="285" width="1" height="8"/><rect x="495" y="283" width="1" height="10"/><rect x="496" y="287" width="1" height="4"/><rect x="497" y="287" width="1" height="4"/><rect x="498" y="287" width="1" height="4"/><rect x="499" y="287" width="1" height="6"/><rect x="500" y="287" width="1" height="6"/><rect x="501" y="287" width="1" height="6"/><rect x="502" y="287" width="1" height="6"/><rect x="503" y="287" width="1" height="4"/><rect x="504" y="287" width="1" height="6"/><rect x="505" y="285" width="1" height="6"/><rect x="506" y="287" width="1" height="4"/><rect x="507" y="287" width="1" height="8"/><rect x="508" y="287" width="1" height="6"/><rect x="509" y="287" width="1" height="6"/><rect x="510" y="287" width="1" height="6"/><rect x="511" y="287" width="1" height="6"/><rect x="512" y="287" width="1" height="4"/><rect x="513" y="287" width="1" height="4"/><rect x="514" y="287" width="1" height="4"/><rect x="515" y="287" width="1" height="4"/><rect x="516" y="287" width="1" height="4"/><rect x="517" y="287" width="1" height="6"/><rect x="518" y="287" width="1" height="6"/><rect x="519" y="287" width="1" height="4"/><rect x="520" y="287" width="1" height="4"/><rect x="521" y="289" width="1" height="4"/><rect x="522" y="287" width="1" height="6"/><rect x="523" y="287" width="1" height="6"/><rect x="524" y="285" width="1" height="8"/><rect x="525" y="285" width="1" height="8"/><rect x="526" y="287" width="1" height="4"/><rect x="527" y="287" width="1" height="6"/><rect x="528" y="287" width="1" height="6"/><rect x="529" y="287" width="1" height="6"/><rect x="530" y="287" width="1" height="6"/><rect x="531" y="287" width="1" height="4"/><rect x="532" y="287" width="1" height="6"/><rect x="533" y="287" width="1" height="6"/><rect x="534" y="287" width="1" height="4"/><rect x="535" y="287" width="1" height="6"/><rect x="536" y="287" width="1" height="4"/><rect x="537" y="287" width="1" height="6"/><rect x="538" y="287" width="1" height="6"/><rect x="539" y="289" width="1" height="2"/><rect x="540" y="287" width="1" height="4"/><rect x="541" y="287" width="1" height="6"/><rect x="542" y="287" width="1" height="6"/><rect x="543" y="287" width="1" height="4"/><rect x="544" y="287" width="1" height="6"/><rect x="545" y="287" width="1" height="6"/><rect x="546" y="287" width="1" height="6"/><rect x="547" y="287" width="1" height="6"/><rect x="548" y="287" width="1" height="6"/><rect x="549" y="287" width="1" height="6"/><rect x="550" y="287" width="1" height="6"/><rect x="551" y="287" width="1" height="6"/><rect x="552" y="287" width="1" height="4"/><rect x="553" y="289" width="1" height="2"/><rect x="554" y="287" width="1" height="6"/><rect x="555" y="287" width="1" height="6"/><rect x="556" y="287" width="1" height="4"/><rect x="557" y="289" width="1" height="4"/><rect x="558" y="287" width="1" height="6"/><rect x="559" y="287" width="1" height="4"/><rect x="560" y="287" width="1" height="4"/><rect x="561" y="287" width="1" height="4"/><rect x="562" y="287" width="1" height="4"/><rect x="563" y="285" width="1" height="6"/><rect x="564" y="287" width="1" height="4"/><rect x="565" y="287" width="1" height="4"/><rect x="566" y="289" width="1" height="2"/><rect x="567" y="287" width="1" height="4"/><rect x="568" y="287" width="1" height="6"/><rect x="569" y="287" width="1" height="4"/><rect x="570" y="289" width="1" height="2"/><rect x="571" y="287" width="1" height="6"/><rect x="572" y="287" width="1" height="6"/><rect x="573" y="287" width="1" height="6"/><rect x="574" y="287" width="1" height="6"/><rect x="575" y="287" width="1" height="4"/><rect x="576" y="287" width="1" height="4"/><rect x="577" y="287" width="1" height="4"/><rect x="578" y="287" width="1" height="4"/><rect x="579" y="287" width="1" height="6"/><rect x="580" y="287" width="1" height="6"/><rect x="581" y="287" width="1" height="6"/><rect x="582" y="287" width="1" height="6"/><rect x="583" y="285" width="1" height="8"/><rect x="584" y="287" width="1" height="6"/><rect x="585" y="287" width="1" height="4"/><rect x="586" y="285" width="1" height="8"/><rect x="587" y="287" width="1" height="6"/><rect x="588" y="287" width="1" height="4"/><rect x="589" y="287" width="1" height="6"/><rect x="590" y="287" width="1" height="6"/><rect x="591" y="287" width="1" height="4"/><rect x="592" y="287" width="1" height="4"/><rect x="593" y="287" width="1" height="6"/><rect x="594" y="287" width="1" height="6"/><rect x="595" y="287" width="1" height="6"/><rect x="596" y="287" width="1" height="4"/><rect x="597" y="287" width="1" height="6"/><rect x="598" y="287" width="1" height="4"/><rect x="599" y="287" width="1" height="6"/><rect x="600" y="289" width="1" height="4"/><rect x="601" y="287" width="1" height="4"/><rect x="602" y="287" width="1" height="4"/><rect x="603" y="287" width="1" height="6"/><rect x="604" y="287" width="1" height="6"/><rect x="605" y="287" width="1" height="4"/><rect x="606" y="287" width="1" height="6"/><rect x="607" y="287" width="1" height="6"/><rect x="608" y="287" width="1" height="6"/><rect x="609" y="287" width="1" height="6"/><rect x="610" y="287" width="1" height="6"/><rect x="611" y="287" width="1" height="6"/><rect x="612" y="287" width="1" height="4"/><rect x="613" y="287" width="1" height="6"/><rect x="614" y="287" width="1" height="4"/><rect x="615" y="287" width="1" height="6"/><rect x="616" y="287" width="1" height="6"/><rect x="617" y="287" width="1" height="4"/><rect x="618" y="287" width="1" height="4"/><rect x="619" y="287" width="1" height="4"/><rect x="620" y="285" width="1" height="8"/><rect x="621" y="287" width="1" height="6"/><rect x="622" y="287" width="1" height="6"/><rect x="623" y="287" width="1" height="6"/><rect x="624" y="289" width="1" height="4"/><rect x="625" y="287" width="1" height="6"/><rect x="626" y="287" width="1" height="6"/><rect x="627" y="289" width="1" height="4"/><rect x="628" y="287" width="1" height="4"/><rect x="629" y="287" width="1" height="4"/><rect x="630" y="287" width="1" height="4"/><rect x="631" y="287" width="1" height="6"/><rect x="632" y="287" width="1" height="6"/><rect x="633" y="287" width="1" height="6"/><rect x="634" y="287" width="1" height="6"/><rect x="635" y="283" width="1" height="8"/><rect x="636" y="287" width="1" height="6"/><rect x="637" y="287" width="1" height="4"/><rect x="638" y="287" width="1" height="4"/><rect x="639" y="287" width="1" height="6"/><rect x="640" y="287" width="1" height="4"/><rect x="641" y="287" width="1" height="6"/><rect x="642" y="287" width="1" height="6"/><rect x="643" y="287" width="1" height="6"/><rect x="644" y="285" width="1" height="8"/><rect x="645" y="287" width="1" height="4"/><rect x="646" y="289" width="1" height="4"/><rect x="647" y="287" width="1" height="4"/><rect x="648" y="287" width="1" height="6"/><rect x="649" y="287" width="1" height="4"/><rect x="650" y="289" width="1" height="4"/><rect x="651" y="287" width="1" height="6"/><rect x="652" y="287" width="1" height="6"/><rect x="653" y="287" width="1" height="6"/><rect x="654" y="289" width="1" height="2"/><rect x="655" y="287" width="1" height="6"/><rect x="656" y="287" width="1" height="4"/><rect x="657" y="287" width="1" height="4"/><rect x="658" y="287" width="1" height="6"/><rect x="659" y="287" width="1" height="6"/><rect x="660" y="289" width="1" height="2"/><rect x="661" y="287" width="1" height="6"/><rect x="662" y="289" width="1" height="4"/><rect x="663" y="289" width="1" height="2"/><rect x="664" y="287" width="1" height="4"/><rect x="665" y="287" width="1" height="6"/><rect x="666" y="287" width="1" height="4"/><rect x="667" y="287" width="1" height="6"/><rect x="668" y="285" width="1" height="8"/><rect x="669" y="287" width="1" height="6"/><rect x="670" y="289" width="1" height="4"/><rect x="671" y="287" width="1" height="4"/><rect x="672" y="287" width="1" height="6"/><rect x="673" y="287" width="1" height="6"/><rect x="674" y="287" width="1" height="4"/><rect x="675" y="287" width="1" height="6"/><rect x="676" y="289" width="1" height="2"/><rect x="677" y="287" width="1" height="6"/><rect x="678" y="287" width="1" height="4"/><rect x="679" y="287" width="1" height="6"/><rect x="680" y="287" width="1" height="6"/><rect x="681" y="287" width="1" height="4"/><rect x="682" y="287" width="1" height="4"/><rect x="683" y="287" width="1" height="4"/><rect x="684" y="287" width="1" height="6"/><rect x="685" y="287" width="1" height="6"/><rect x="686" y="287" width="1" height="4"/><rect x="687" y="285" width="1" height="10"/><rect x="688" y="287" width="1" height="6"/><rect x="689" y="287" width="1" height="6"/><rect x="690" y="287" width="1" height="4"/><rect x="691" y="287" width="1" height="4"/><rect x="692" y="287" width="1" height="6"/><rect x="693" y="287" width="1" height="4"/><rect x="694" y="285" width="1" height="8"/><rect x="695" y="283" width="1" height="8"/><rect x="696" y="285" width="1" height="8"/><rect x="697" y="285" width="1" height="10"/><rect x="698" y="285" width="1" height="10"/><rect x="699" y="285" width="1" height="8"/><rect x="700" y="285" width="1" height="8"/><rect x="701" y="285" width="1" height="10"/><rect x="702" y="283" width="1" height="14"/><rect x="703" y="285" width="1" height="12"/><rect x="704" y="285" width="1" height="12"/><rect x="705" y="287" width="1" height="10"/><rect x="706" y="287" width="1" height="10"/><rect x="707" y="285" width="1" height="8"/><rect x="708" y="285" width="1" height="12"/><rect x="709" y="285" width="1" height="8"/><rect x="710" y="283" width="1" height="10"/><rect x="711" y="285" width="1" height="12"/><rect x="712" y="285" width="1" height="12"/><rect x="713" y="287" width="1" height="6"/><rect x="714" y="287" width="1" height="4"/><rect x="715" y="287" width="1" height="6"/><rect x="716" y="287" width="1" height="4"/><rect x="717" y="287" width="1" height="6"/><rect x="718" y="287" width="1" height="4"/><rect x="719" y="289" width="1" height="4"/><rect x="720" y="287" width="1" height="4"/><rect x="721" y="289" width="1" height="2"/><rect x="722" y="287" width="1" height="4"/><rect x="723" y="289" width="1" height="4"/><rect x="724" y="289" width="1" height="4"/><rect x="725" y="287" width="1" height="4"/><rect x="726" y="289" width="1" height="4"/><rect x="727" y="287" width="1" height="6"/><rect x="728" y="287" width="1" height="6"/><rect x="729" y="287" width="1" height="6"/><rect x="730" y="289" width="1" height="4"/><rect x="731" y="287" width="1" height="6"/><rect x="732" y="287" width="1" height="6"/><rect x="733" y="287" width="1" height="6"/><rect x="734" y="287" width="1" height="6"/><rect x="735" y="287" width="1" height="4"/><rect x="736" y="287" width="1" height="4"/><rect x="737" y="287" width="1" height="6"/><rect x="738" y="287" width="1" height="4"/><rect x="739" y="287" width="1" height="6"/><rect x="740" y="287" width="1" height="4"/><rect x="741" y="287" width="1" height="4"/><rect x="742" y="287" width="1" height="6"/><rect x="743" y="287" width="1" height="6"/><rect x="744" y="289" width="1" height="4"/><rect x="745" y="289" width="1" height="2"/><rect x="746" y="287" width="1" height="6"/><rect x="747" y="287" width="1" height="4"/><rect x="748" y="287" width="1" height="8"/><rect x="749" y="287" width="1" height="6"/><rect x="750" y="287" width="1" height="4"/><rect x="751" y="287" width="1" height="4"/><rect x="752" y="285" width="1" height="8"/><rect x="753" y="287" width="1" height="6"/><rect x="754" y="287" width="1" height="6"/><rect x="755" y="287" width="1" height="4"/><rect x="756" y="287" width="1" height="6"/><rect x="757" y="287" width="1" height="4"/><rect x="758" y="287" width="1" height="4"/><rect x="759" y="287" width="1" height="6"/><rect x="760" y="289" width="1" height="2"/><rect x="761" y="287" width="1" height="6"/><rect x="762" y="289" width="1" height="2"/><rect x="763" y="287" width="1" height="6"/><rect x="764" y="287" width="1" height="6"/><rect x="765" y="287" width="1" height="6"/><rect x="766" y="287" width="1" height="6"/><rect x="767" y="287" width="1" height="6"/><rect x="768" y="289" width="1" height="2"/><rect x="769" y="287" width="1" height="6"/><rect x="770" y="287" width="1" height="6"/><rect x="771" y="287" width="1" height="6"/><rect x="772" y="287" width="1" height="4"/><rect x="773" y="287" width="1" height="4"/><rect x="774" y="289" width="1" height="4"/><rect x="775" y="287" width="1" height="6"/><rect x="776" y="287" width="1" height="6"/><rect x="777" y="287" width="1" height="6"/></g>
<g fill="#70d0a0"><rect x="22" y="287" width="1" height="2"/><rect x="23" y="287" width="1" height="2"/><rect x="26" y="287" width="1" height="2"/><rect x="29" y="287" width="1" height="2"/><rect x="38" y="291" width="1" height="2"/><rect x="39" y="287" width="1" height="2"/><rect x="43" y="287" width="1" height="2"/><rect x="48" y="287" width="1" height="2"/><rect x="50" y="287" width="1" height="2"/><rect x="54" y="287" width="1" height="2"/><rect x="55" y="287" width="1" height="2"/><rect x="56" y="291" width="1" height="2"/><rect x="61" y="287" width="1" height="2"/><rect x="61" y="291" width="1" height="2"/><rect x="64" y="287" width="1" height="2"/><rect x="69" y="287" width="1" height="2"/><rect x="70" y="287" width="1" height="2"/><rect x="75" y="287" width="1" height="2"/><rect x="77" y="291" width="1" height="2"/><rect x="80" y="287" width="1" height="2"/><rect x="86" y="291" width="1" height="2"/><rect x="88" y="287" width="1" height="2"/><rect x="91" y="287" width="1" height="2"/><rect x="92" y="291" width="1" height="2"/><rect x="93" y="287" width="1" height="2"/><rect x="94" y="287" width="1" height="2"/><rect x="100" y="287" width="1" height="2"/><rect x="104" y="287" width="1" height="2"/><rect x="126" y="287" width="1" height="2"/><rect x="135" y="287" width="1" height="2"/><rect x="138" y="291" width="1" height="2"/><rect x="143" y="287" width="1" height="2"/><rect x="148" y="287" width="1" height="2"/><rect x="162" y="287" width="1" height="2"/><rect x="165" y="287" width="1" height="2"/><rect x="175" y="287" width="1" height="2"/><rect x="190" y="287" width="1" height="2"/><rect x="194" y="287" width="1" height="2"/><rect x="195" y="287" width="1" height="2"/><rect x="200" y="287" width="1" height="2"/><rect x="216" y="287" width="1" height="2"/><rect x="222" y="287" width="1" height="2"/><rect x="223" y="287" width="1" height="2"/><rect x="225" y="287" width="1" height="2"/><rect x="231" y="287" width="1" height="2"/><rect x="235" y="287" width="1" height="2"/><rect x="242" y="287" width="1" height="2"/><rect x="246" y="287" width="1" height="2"/><rect x="246" y="291" width="1" height="2"/><rect x="247" y="291" width="1" height="2"/><rect x="252" y="291" width="1" height="2"/><rect x="262" y="291" width="1" height="2"/><rect x="264" y="287" width="1" height="2"/><rect x="270" y="287" width="1" height="2"/><rect x="274" y="287" width="1" height="2"/><rect x="278" y="291" width="1" height="2"/><rect x="279" y="287" width="1" height="2"/><rect x="281" y="291" width="1" height="2"/><rect x="291" y="287" width="1" height="2"/><rect x="292" y="287" width="1" height="2"/><rect x="292" y="291" width="1" height="2"/><rect x="302" y="291" width="1" height="2"/><rect x="304" y="287" width="1" height="2"/><rect x="323" y="287" width="1" height="2"/><rect x="331" y="287" width="1" height="2"/><rect x="340" y="287" width="1" height="2"/><rect x="340" y="291" width="1" height="2"/><rect x="341" y="287" width="1" height="2"/><rect x="343" y="287" width="1" height="2"/><rect x="345" y="287" width="1" height="2"/><rect x="347" y="287" width="1" height="2"/><rect x="348" y="287" width="1" height="2"/><rect x="349" y="291" width="1" height="2"/><rect x="350" y="287" width="1" height="2"/><rect x="351" y="287" width="1" height="2"/><rect x="360" y="287" width="1" height="2"/><rect x="361" y="291" width="1" height="2"/><rect x="365" y="291" width="1" height="2"/><rect x="366" y="287" width="1" height="2"/><rect x="371" y="287" width="1" height="2"/><rect x="372" y="287" width="1" height="2"/><rect x="373" y="287" width="1" height="2"/><rect x="376" y="287" width="1" height="2"/><rect x="379" y="287" width="1" height="2"/><rect x="380" y="287" width="1" height="2"/><rect x="384" y="287" width="1" height="2"/><rect x="386" y="287" width="1" height="2"/><rect x="390" y="287" width="1" height="2"/><rect x="394" y="287" width="1" height="2"/><rect x="397" y="287" width="1" height="2"/><rect x="407" y="287" width="1" height="2"/><rect x="411" y="287" width="1" height="2"/><rect x="431" y="287" width="1" height="2"/><rect x="435" y="287" width="1" height="2"/><rect x="440" y="287" width="1" height="2"/><rect x="446" y="287" width="1" height="2"/><rect x="463" y="291" width="1" height="2"/><rect x="464" y="287" width="1" height="2"/><rect x="467" y="291" width="1" height="2"/><rect x="477" y="291" width="1" height="2"/><rect x="507" y="287" width="1" height="2"/><rect x="515" y="287" width="1" height="2"/><rect x="519" y="287" width="1" height="2"/><rect x="526" y="287" width="1" height="2"/><rect x="530" y="287" width="1" height="2"/><rect x="530" y="291" width="1" height="2"/><rect x="535" y="287" width="1" height="2"/><rect x="537" y="287" width="1" height="2"/><rect x="543" y="287" width="1" height="2"/><rect x="550" y="287" width="1" height="2"/><rect x="555" y="287" width="1" height="2"/><rect x="556" y="287" width="1" height="2"/><rect x="560" y="287" width="1" height="2"/><rect x="561" y="287" width="1" height="2"/><rect x="562" y="287" width="1" height="2"/><rect x="581" y="287" width="1" height="2"/><rect x="585" y="287" width="1" height="2"/><rect x="590" y="287" width="1" height="2"/><rect x="590" y="291" width="1" height="2"/><rect x="593" y="287" width="1" height="2"/><rect x="594" y="287" width="1" height="2"/><rect x="594" y="291" width="1" height="2"/><rect x="595" y="287" width="1" height="2"/><rect x="598" y="287" width="1" height="2"/><rect x="604" y="291" width="1" height="2"/><rect x="605" y="287" width="1" height="2"/><rect x="607" y="287" width="1" height="2"/><rect x="608" y="291" width="1" height="2"/><rect x="610" y="291" width="1" height="2"/><rect x="614" y="287" width="1" height="2"/><rect x="615" y="291" width="1" height="2"/><rect x="621" y="287" width="1" height="2"/><rect x="628" y="287" width="1" height="2"/><rect x="631" y="287" width="1" height="2"/><rect x="633" y="287" width="1" height="2"/><rect x="634" y="291" width="1" height="2"/><rect x="643" y="287" width="1" height="2"/><rect x="645" y="287" width="1" height="2"/><rect x="658" y="287" width="1" height="2"/><rect x="669" y="287" width="1" height="2"/><rect x="670" y="291" width="1" height="2"/><rect x="673" y="287" width="1" height="2"/><rect x="675" y="287" width="1" height="2"/><rect x="679" y="287" width="1" height="2"/><rect x="680" y="287" width="1" height="2"/><rect x="686" y="287" width="1" height="2"/><rect x="688" y="287" width="1" height="2"/><rect x="690" y="287" width="1" height="2"/><rect x="692" y="287" width="1" height="2"/><rect x="715" y="287" width="1" height="2"/><rect x="717" y="287" width="1" height="2"/><rect x="720" y="287" width="1" height="2"/><rect x="724" y="291" width="1" height="2"/><rect x="727" y="291" width="1" height="2"/><rect x="728" y="287" width="1" height="2"/><rect x="729" y="287" width="1" height="2"/><rect x="731" y="287" width="1" height="2"/><rect x="733" y="287" width="1" height="2"/><rect x="735" y="287" width="1" height="2"/><rect x="737" y="287" width="1" height="2"/><rect x="738" y="287" width="1" height="2"/><rect x="743" y="287" width="1" height="2"/><rect x="747" y="287" width="1" height="2"/><rect x="749" y="287" width="1" height="2"/><rect x="750" y="287" width="1" height="2"/><rect x="754" y="291" width="1" height="2"/><rect x="756" y="287" width="1" height="2"/><rect x="759" y="287" width="1" height="2"/><rect x="763" y="287" width="1" height="2"/><rect x="764" y="287" width="1" height="2"/><rect x="765" y="291" width="1" height="2"/><rect x="767" y="287" width="1" height="2"/><rect x="771" y="287" width="1" height="2"/><rect x="772" y="287" width="1" height="2"/><rect x="775" y="287" width="1" height="2"/><rect x="776" y="287" width="1" height="2"/><rect x="777" y="291" width="1" height="2"/></g>
<rect x="28" y="19" width="317" height="26" rx="3" ry="3" fill="#88b0be" style="shape-rendering:auto" />
<rect x="28" y="19" width="317" height="3" fill="#88b0be" />
<rect x="30" y="21" width="312" height="22" rx="4" ry="4" fill="#000" style="shape-rendering:auto" />
<text x="39.50 49.50 59.50 69.50 79.50 89.50 99.50 109.50 119.50 129.50 139.50 149.50 159.50 169.50" y="36" fill="#d448dc" font-size="15"  stroke="#000" stroke-width="0.2">1:&#160;200mV&#160;10.us</text>
<path d="M394.8 20.8 H407.2 V31 L401 34.2 L394.8 31 Z" fill="#000" stroke="#8a2cc8" stroke-width="1.6"/>
<rect x="397" y="24" width="8" height="1" fill="#a040e0" />
<rect x="400" y="25" width="2" height="6" fill="#a040e0" />
<path d="M780.5 227.5 L794 221.5 L794 234 Z" fill="#a020d8"/>
<path d="M0.5 279.5 H15 L19.5 288 L15 296.5 H0.5 Z" fill="#000" stroke="#38d038" stroke-width="1"/>
<rect x="3" y="283" width="2" height="10" fill="#50d050" />
<rect x="5" y="284" width="1" height="2" fill="#50d050" />
<rect x="6" y="286" width="1" height="3" fill="#50d050" />
<rect x="7" y="289" width="2" height="4" fill="#50d050" />
<rect x="9" y="286" width="1" height="3" fill="#50d050" />
<rect x="10" y="284" width="1" height="2" fill="#50d050" />
<rect x="11" y="283" width="2" height="10" fill="#50d050" />
<rect x="26" y="449" width="187" height="70" rx="5" ry="5" fill="#88b0be" style="shape-rendering:auto" />
<rect x="28" y="451" width="183" height="66" rx="3.5" ry="3.5" fill="#000" style="shape-rendering:auto" />
<circle cx="36" cy="460" r="7.6" fill="#e6e020"/>
<text x="35.8" y="464.5" fill="#000" font-size="14" text-anchor="middle" font-family="Liberation Sans" font-weight="bold">2</text>
<path d="M44.5 464.5 L48.5 459.2 L52.5 464.5 Z" fill="none" stroke="#f0f0f0" stroke-width="1"/>
<text x="53.50 63.50 73.50 83.50 93.50 103.50 113.50 123.50 133.50" y="466" fill="#fafafa" font-size="15"  stroke="#000" stroke-width="0.2">y:404.0mV</text>
<text x="43.50 53.50 63.50 73.50 83.50 93.50 103.50 113.50 123.50 133.50 143.50" y="488" fill="#fafafa" font-size="15"  stroke="#000" stroke-width="0.2">y1:-212.0mV</text>
<text x="43.50 53.50 63.50 73.50 83.50 93.50 103.50 113.50 123.50 133.50" y="510" fill="#fafafa" font-size="15"  stroke="#000" stroke-width="0.2">y2:192.0mV</text>
<rect x="0" y="519" width="319" height="81" fill="#88b0be" />
<rect x="6" y="519" width="14" height="1" fill="#0682e2" />
<rect x="2" y="520" width="206" height="19" rx="3" ry="3" fill="#000" style="shape-rendering:auto" />
<rect x="2" y="541" width="206" height="18" rx="3" ry="3" fill="#000" style="shape-rendering:auto" />
<rect x="211" y="520" width="106" height="39" rx="4" ry="4" fill="#000" style="shape-rendering:auto" />
<rect x="1" y="561" width="316" height="18" rx="3" ry="3" fill="#000" style="shape-rendering:auto" />
<rect x="2" y="579" width="315" height="19" fill="#0682e2" />
<circle cx="10" cy="530" r="8" fill="#e81010"/>
<path d="M8 527.6 L11 525 V535.5" fill="none" stroke="#200000" stroke-width="1.9"/>
<text x="17.80 27.80 37.80 47.80 57.80 67.80 77.80 87.80 97.80 107.80 117.80 127.80 137.80 147.80 157.80 167.80" y="536" fill="#e03030" font-size="15"  stroke="#000" stroke-width="0.2">5.00mVBW-0.00div</text>
<circle cx="10" cy="550" r="8" fill="#e6e020"/>
<text x="9.8" y="555" fill="#000" font-size="14" text-anchor="middle" font-family="Liberation Sans" font-weight="bold">2</text>
<text x="18.00 28.00 38.00 48.00 58.00 68.00 78.00 88.00 98.00 108.00 118.00 128.00 138.00 148.00 158.00 168.00 178.00" y="555" fill="#eeee70" font-size="15"  stroke="#000" stroke-width="0.2">100mVBW-&#160;-0.36div</text>
<text x="229.00 239.00 249.00 259.00 269.00 279.00 289.00" y="535" fill="#fafafa" font-size="15"  stroke="#000" stroke-width="0.2">(1GS/s)</text>
<text x="223.50 233.50 243.50 253.50 263.50 273.50 283.50 293.50" y="554" fill="#fafafa" font-size="15"  stroke="#000" stroke-width="0.2">Depth:1M</text>
<circle cx="9" cy="570" r="8" fill="#e6e020"/>
<text x="9.6" y="575" fill="#000" font-size="14" text-anchor="middle" font-family="Liberation Sans" font-weight="bold">2</text>
<text x="21.00 31.00 41.00 51.00 61.00" y="575" fill="#eeee70" font-size="15"  stroke="#000" stroke-width="0.2">F:&#160;&#160;?</text>
<circle cx="168" cy="570" r="8" fill="#e6e020"/>
<text x="168.4" y="575" fill="#000" font-size="14" text-anchor="middle" font-family="Liberation Sans" font-weight="bold">2</text>
<text x="181.00 191.00 201.00 211.00 221.00 231.00 241.00 251.00 261.00 271.00" y="575" fill="#eeee70" font-size="15"  stroke="#000" stroke-width="0.2">Ma:8.000mv</text>
<rect x="319" y="538" width="480" height="61" fill="#0462a6" />
<rect x="319" y="519" width="461" height="1" fill="#0a6ac4" />
<rect x="319" y="520" width="100" height="18" rx="9" ry="9" fill="#000" style="shape-rendering:auto" />
<text x="338.50 348.50 358.50 368.50 378.50 388.50" y="534" fill="#fafafa" font-size="15"  stroke="#000" stroke-width="0.2">M:10us</text>
<rect x="665" y="520" width="129" height="18" rx="9" ry="9" fill="#000" style="shape-rendering:auto" />
<circle cx="675.5" cy="528.7" r="7.8" fill="#e81010"/>
<path d="M673.5 526 L676.5 523.5 V534" fill="none" stroke="#200000" stroke-width="1.9"/>
<path d="M685 535.5 H694 L697.5 522.5 H705" fill="none" stroke="#fafafa" stroke-width="1.1"/>
<text x="706.50 716.50 726.50 736.50 746.50 756.50" y="535" fill="#fafafa" font-size="15"  stroke="#000" stroke-width="0.2">4.20mV</text>
<rect x="321" y="540" width="2" height="57" fill="#0750a8" />
<rect x="321" y="539" width="89" height="2" fill="#0750a8" />
<rect x="323" y="541" width="89" height="56" rx="3" ry="3" fill="#0a3a90" style="shape-rendering:auto" />
<rect x="323" y="541" width="87" height="54" rx="3" ry="3" fill="#5cb2f2" style="shape-rendering:auto" />
<rect x="325" y="543" width="85" height="52" fill="#0682e2" />
<rect x="596" y="540" width="2" height="57" fill="#0750a8" />
<rect x="596" y="539" width="89" height="2" fill="#0750a8" />
<rect x="598" y="541" width="89" height="56" rx="3" ry="3" fill="#0a3a90" style="shape-rendering:auto" />
<rect x="598" y="541" width="87" height="54" rx="3" ry="3" fill="#5cb2f2" style="shape-rendering:auto" />
<rect x="600" y="543" width="85" height="52" fill="#0682e2" />
<text x="346.00 356.00 366.00 376.00" y="562" fill="#0a1440" font-size="15" >Type</text>
<rect x="341" y="571" width="51" height="20" fill="#e4e4e4" />
<text x="341.00 351.00 361.00 371.00 381.00" y="586" fill="#080808" font-size="15" >Image</text>
<text x="621.00 631.00 641.00 651.00" y="574" fill="#0a1440" font-size="15" >Save</text>
</svg></body></html>
